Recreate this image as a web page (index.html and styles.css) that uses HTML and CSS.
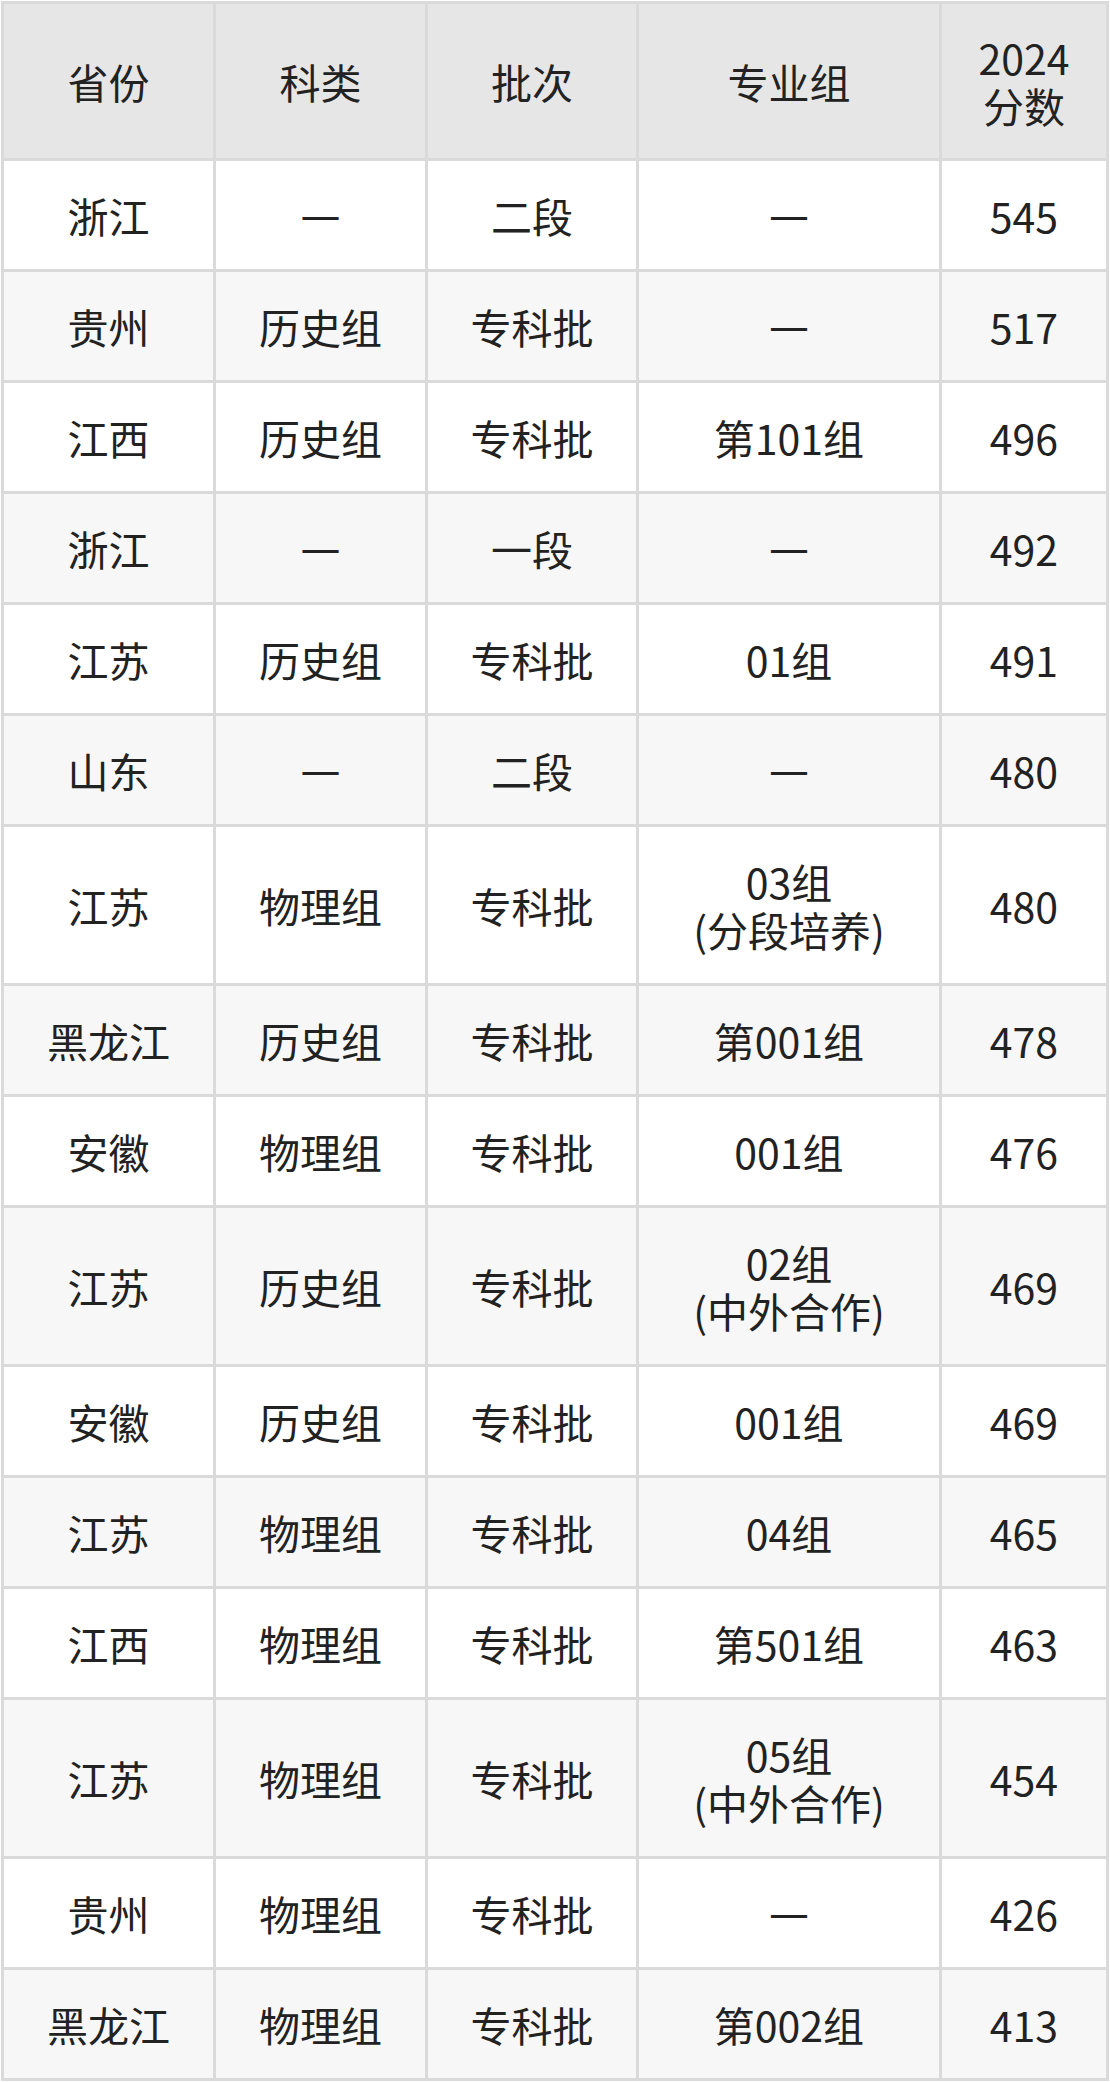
FILE: index.html
```html
<!DOCTYPE html>
<html lang="zh-CN">
<head>
<meta charset="utf-8">
<title>分数表</title>
<link rel="stylesheet" href="styles.css">
</head>
<body>
<table class="score-table">
  <colgroup>
    <col class="c1"><col class="c2"><col class="c3"><col class="c4"><col class="c5">
  </colgroup>
  <thead>
    <tr><th>省份</th><th>科类</th><th>批次</th><th>专业组</th><th>2024<br>分数</th></tr>
  </thead>
  <tbody>
    <tr><td>浙江</td><td><span class="dash">—</span></td><td>二段</td><td><span class="dash">—</span></td><td>545</td></tr>
    <tr><td>贵州</td><td>历史组</td><td>专科批</td><td><span class="dash">—</span></td><td>517</td></tr>
    <tr><td>江西</td><td>历史组</td><td>专科批</td><td>第101组</td><td>496</td></tr>
    <tr><td>浙江</td><td><span class="dash">—</span></td><td>一段</td><td><span class="dash">—</span></td><td>492</td></tr>
    <tr><td>江苏</td><td>历史组</td><td>专科批</td><td>01组</td><td>491</td></tr>
    <tr><td>山东</td><td><span class="dash">—</span></td><td>二段</td><td><span class="dash">—</span></td><td>480</td></tr>
    <tr><td>江苏</td><td>物理组</td><td>专科批</td><td>03组<br>(分段培养)</td><td>480</td></tr>
    <tr><td>黑龙江</td><td>历史组</td><td>专科批</td><td>第001组</td><td>478</td></tr>
    <tr><td>安徽</td><td>物理组</td><td>专科批</td><td>001组</td><td>476</td></tr>
    <tr><td>江苏</td><td>历史组</td><td>专科批</td><td>02组<br>(中外合作)</td><td>469</td></tr>
    <tr><td>安徽</td><td>历史组</td><td>专科批</td><td>001组</td><td>469</td></tr>
    <tr><td>江苏</td><td>物理组</td><td>专科批</td><td>04组</td><td>465</td></tr>
    <tr><td>江西</td><td>物理组</td><td>专科批</td><td>第501组</td><td>463</td></tr>
    <tr><td>江苏</td><td>物理组</td><td>专科批</td><td>05组<br>(中外合作)</td><td>454</td></tr>
    <tr><td>贵州</td><td>物理组</td><td>专科批</td><td><span class="dash">—</span></td><td>426</td></tr>
    <tr><td>黑龙江</td><td>物理组</td><td>专科批</td><td>第002组</td><td>413</td></tr>
  </tbody>
</table>
</body>
</html>
```
FILE: styles.css
```css
html, body {
  margin: 0;
  padding: 0;
  background: #ffffff;
}
.score-table {
  border-collapse: collapse;
  table-layout: fixed;
  width: 1108px;
  margin: 1px 0 0 1px;
  font-family: "Noto Sans CJK SC", "Noto Sans", sans-serif;
  font-size: 41px;
  line-height: 48px;
  color: #222222;
}
.c1 { width: 212px; }
.c2 { width: 212px; }
.c3 { width: 211px; }
.c4 { width: 303px; }
.c5 { width: 167px; }
.score-table th,
.score-table td {
  border: 3px solid #dadada;
  text-align: center;
  vertical-align: middle;
  padding: 30px 2px;
  font-weight: normal;
}
.score-table th {
  background: #e6e6e6;
  padding: 29px 2px;
}
.score-table tbody tr:nth-child(odd) td {
  background: #ffffff;
}
.score-table tbody tr:nth-child(even) td {
  background: #f7f7f7;
}
.dash {
  font-family: "DejaVu Sans", sans-serif;
  font-size: 40px;
  line-height: 0;
  vertical-align: 3px;
}
```
